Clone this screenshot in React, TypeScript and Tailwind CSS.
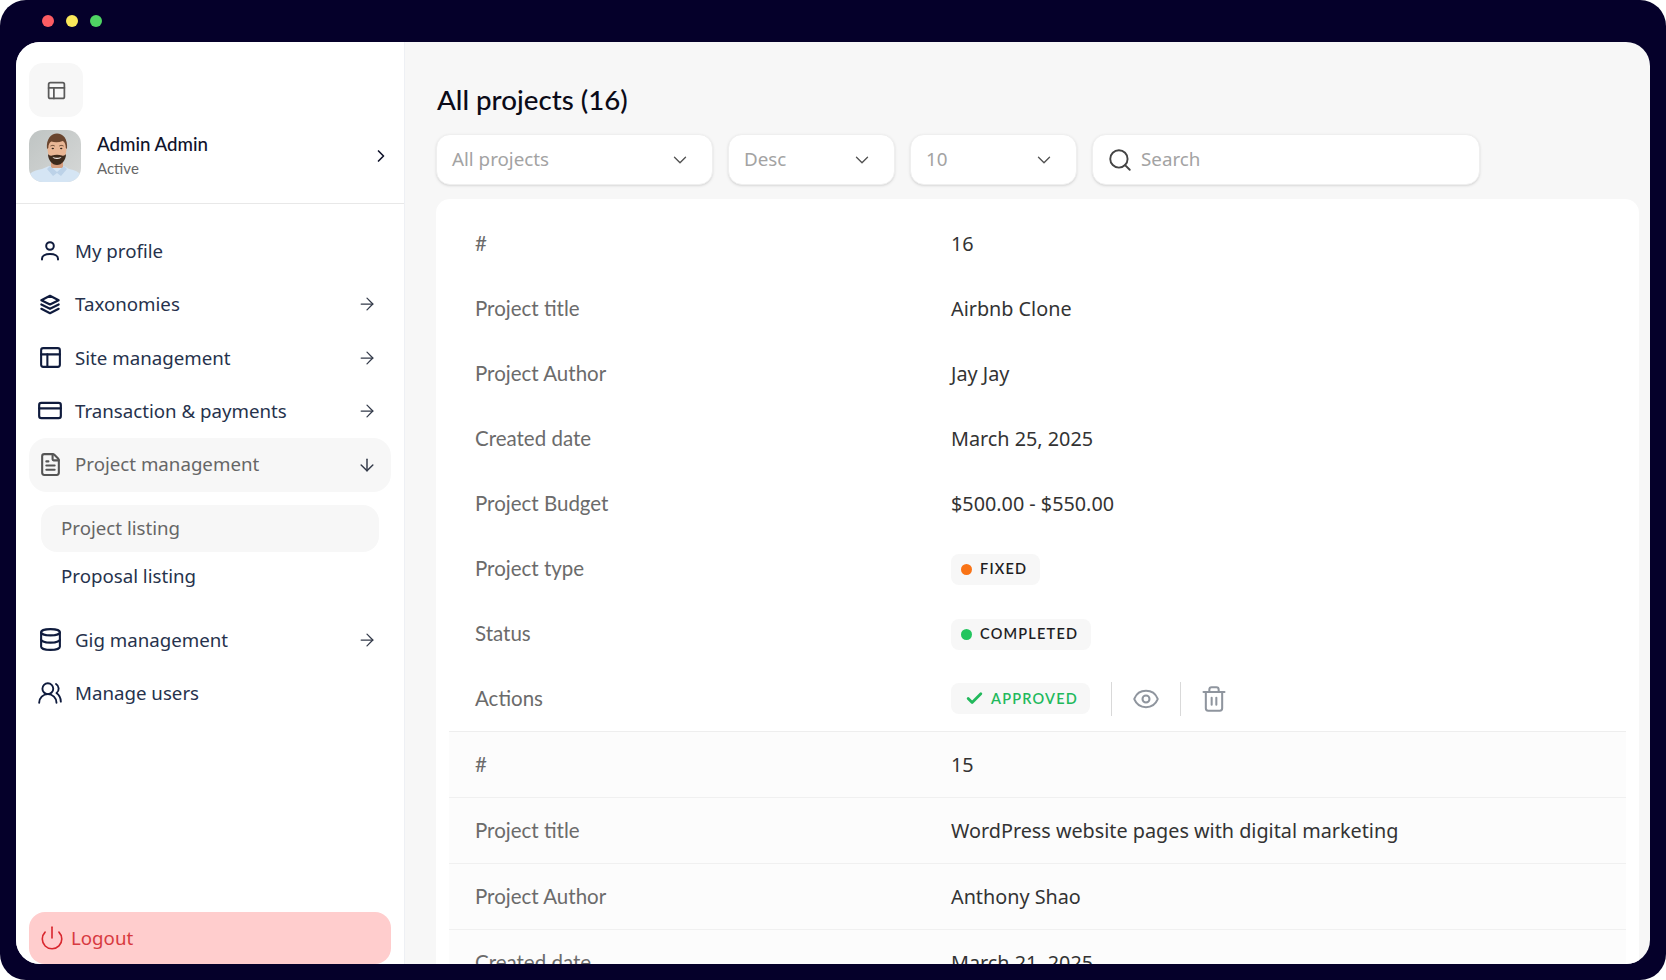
import { ArrowDown, ArrowRight, Check, ChevronDown, ChevronRight, CreditCard, Database, Eye, FileText, PanelsTopLeft, Power, Search, Trash2, UsersRound } from "lucide-react";
import { TbStack2 } from "react-icons/tb";

const firstRecord = [
  { label: "#", value: "16" },
  { label: "Project title", value: "Airbnb Clone" },
  { label: "Project Author", value: "Jay Jay" },
  { label: "Created date", value: "March 25, 2025" },
  { label: "Project Budget", value: "$500.00 - $550.00" },
];

const secondRecord = [
  { label: "#", value: "15" },
  { label: "Project title", value: "WordPress website pages with digital marketing" },
  { label: "Project Author", value: "Anthony Shao" },
  { label: "Created date", value: "March 21, 2025" },
];

const Avatar = () => (
  <svg viewBox="0 0 52 52" className="w-[52px] h-[52px] rounded-[14px] shrink-0">
    <defs>
      <linearGradient id="wall" x1="0" y1="0" x2="1" y2="1">
        <stop offset="0" stopColor="#bfc4c3" />
        <stop offset="1" stopColor="#d6d8d7" />
      </linearGradient>
      <filter id="soft">
        <feGaussianBlur stdDeviation="0.35" />
      </filter>
    </defs>
    <rect width="52" height="52" fill="url(#wall)" />
    <g filter="url(#soft)">
      <path d="M0 52v-7c2-3 7-5 13-6l7-3h15l5 3c6 1 10 3 12 6v7z" fill="#d5e5f4" />
      <rect x="22" y="28" width="12" height="10" fill="#d59d7e" />
      <path d="M21 36l7 6 7-6 3 3-6 7-4-3-4 3-6-7z" fill="#bcd2e8" />
      <ellipse cx="28" cy="19" rx="9.500" ry="13.500" fill="#e9b695" />
      <path d="M18 19c-1-10 4-15.500 10-15.500s11 5 10 15.500l-1.200-1c0-3-1-6-3-7-4 1.500-8 1.500-11.500.5-2 1-3 3.500-3 6.500z" fill="#6a452e" />
      <path d="M19 24c1 1.500 2.500 2 4 1.500 3-1 7-1 10 0 1.500.5 3 0 4-1.500 0 6-4 11-9 11s-9-5-9-11z" fill="#3d2a1f" />
      <path d="M23.500 27c2 1 7 1 9 0-1 2.500-8 2.500-9 0z" fill="#f7f1eb" />
      <ellipse cx="23.800" cy="18.500" rx="1.200" ry=".8" fill="#33251d" />
      <ellipse cx="32.200" cy="18.500" rx="1.200" ry=".8" fill="#33251d" />
      <path d="M21.500 16c1.500-.8 3-.8 4.200 0M30.300 16c1.200-.8 2.700-.8 4.200 0" stroke="#5a3c28" strokeWidth=".9" fill="none" />
    </g>
  </svg>
);

const UserIcon = () => (
  <svg viewBox="0 0 24 24" width="24" height="24" fill="none" stroke="currentColor" strokeWidth="2" strokeLinecap="round">
    <circle cx="12" cy="7" r="3.800" />
    <path d="M4 20.500v-.800c0-2.800 3.200-4.700 8-4.700s8 1.900 8 4.700v.800" />
  </svg>
);

const NavItem = ({ icon, label, arrow = true }: { icon: React.ReactNode; label: string; arrow?: boolean }) => (
  <div className="h-[53.250px] pl-[8px] pr-[14px] flex items-center text-[#26324c]">
    <span className="w-[26px] flex justify-center shrink-0 text-[#0f1b3d]">{icon}</span>
    <span className="ml-[12px] text-[18.700px] flex-1">{label}</span>
    {arrow && <ArrowRight size={20} strokeWidth={1.5} className="text-[#333a49]" />}
  </div>
);

const Sidebar = () => (
  <aside className="w-[389px] shrink-0 bg-white border-r border-[#eef0f4] flex flex-col font-['Noto_Sans',sans-serif]">
    <div className="pt-[21px] px-[13px] h-[162px] border-b border-[#e8e8e8]">
      <button className="w-[54px] h-[54px] rounded-[14px] bg-[#f7f7f7] flex items-center justify-center text-[#5a5a5a]">
        <PanelsTopLeft size={21} strokeWidth={2} />
      </button>
      <div className="mt-[13px] flex items-center">
        <Avatar />
        <div className="ml-[16px] flex-1 mb-[2px]">
          <div className="font-['Lato',sans-serif] text-[18.700px] leading-[24px] font-medium text-[#10132b]">Admin Admin</div>
          <div className="font-['Lato',sans-serif] text-[15px] leading-[20px] mt-[2px] text-[#666]">Active</div>
        </div>
        <ChevronRight size={20} strokeWidth={2} className="text-[#10132b]" />
      </div>
    </div>
    <nav className="pt-[20.500px] px-[13px] flex-1 flex flex-col">
      <NavItem icon={<UserIcon />} label="My profile" arrow={false} />
      <NavItem icon={<TbStack2 size={29} />} label="Taxonomies" />
      <NavItem icon={<PanelsTopLeft size={25} strokeWidth={2} />} label="Site management" />
      <NavItem icon={<CreditCard size={27} strokeWidth={2} />} label="Transaction & payments" />
      <div className="h-[54px] pl-[8px] pr-[14px] flex items-center rounded-[18px] bg-[#f7f7f7] text-[#666]">
        <span className="w-[26px] flex justify-center shrink-0">
          <FileText size={25} strokeWidth={2} className="text-[#555]" />
        </span>
        <span className="ml-[12px] text-[18.700px] flex-1">Project management</span>
        <ArrowDown size={20} strokeWidth={1.75} className="text-[#333a49]" />
      </div>
      <div className="mt-[13px] mx-[12px] h-[47px] pl-[20px] flex items-center rounded-[16px] bg-[#f7f7f7] text-[18.700px] text-[#666]">Project listing</div>
      <div className="mx-[12px] h-[49px] pl-[20px] flex items-center text-[18.700px] text-[#26324c]">Proposal listing</div>
      <div className="mt-[12.500px]">
        <NavItem icon={<Database size={25} strokeWidth={2} />} label="Gig management" />
        <NavItem icon={<UsersRound size={26} strokeWidth={1.75} />} label="Manage users" arrow={false} />
      </div>
      <button className="mt-auto h-[52px] pl-[10px] flex items-center rounded-[16px] bg-[#ffcdcd] text-[18.700px] text-[#d83a40]">
        <Power size={26} strokeWidth={1.5} className="text-[#d9272e]" />
        <span className="ml-[6px]">Logout</span>
      </button>
    </nav>
  </aside>
);

const Select = ({ value, width }: { value: string; width: string }) => (
  <div className={`${width} h-[51px] pl-[15px] pr-[21px] flex items-center justify-between bg-white rounded-[14px] border border-[#efefef] shadow-sm text-[18.800px] text-[#a3a3a3]`}>
    <span>{value}</span>
    <ChevronDown size={22} strokeWidth={1.5} className="text-[#555]" />
  </div>
);

const Row = ({ label, children, lined }: { label: string; children: React.ReactNode; lined?: boolean }) => (
  <div className={`flex items-center pl-[26px] ${lined ? "h-[66px] pt-[1px] border-b border-[#f0f0f0]" : "h-[65px]"}`}>
    <div className="w-[476px] pb-[1px] font-['Lato',sans-serif] text-[20.500px] text-[#6b6b6b]">{label}</div>
    <div className="text-[19.800px] text-[#333] flex items-center">{children}</div>
  </div>
);

const Badge = ({ dot, text }: { dot: string; text: string }) => (
  <span className="h-[31px] pl-[10px] pr-[13px] inline-flex items-center rounded-[8px] bg-[#f7f7f7] font-['Lato',sans-serif] text-[14.500px] font-semibold tracking-[1.200px] text-[#1e1e24]">
    <span className={`w-[11px] h-[11px] rounded-full ${dot}`} />
    <span className="ml-[8px]">{text}</span>
  </span>
);

export default function App() {
  return (
    <div className="w-full h-[980px] bg-white font-['Noto_Sans',sans-serif] overflow-hidden">
      <div className="h-full bg-[#05002a] rounded-[26px] flex flex-col pb-[16px] px-[16px]">
        <div className="h-[42px] shrink-0 pl-[26px] flex items-center gap-[12px]">
          <span className="w-[12px] h-[12px] rounded-full bg-[#fd5c63]" />
          <span className="w-[12px] h-[12px] rounded-full bg-[#fbe85a]" />
          <span className="w-[12px] h-[12px] rounded-full bg-[#4fd463]" />
        </div>
        <div className="flex-1 min-h-0 flex rounded-[24px] overflow-hidden bg-[#f7f7f7]">
          <Sidebar />
          <main className="flex-1 min-w-0 pl-[31px] pr-[11px] overflow-hidden">
            <h1 className="mt-[38px] pl-[1px] h-[40px] leading-[40px] font-['Lato',sans-serif] text-[27.700px] font-medium text-[#0b0b18]">All projects (16)</h1>
            <div className="mt-[14px] flex gap-[15px]">
              <Select value="All projects" width="w-[277px]" />
              <Select value="Desc" width="w-[167px]" />
              <Select value="10" width="w-[167px]" />
              <div className="w-[388px] h-[51px] pl-[14px] flex items-center bg-white rounded-[14px] border border-[#efefef] shadow-sm text-[18.800px] text-[#a3a3a3]">
                <Search size={26} strokeWidth={1.75} className="text-[#444]" />
                <span className="ml-[8px]">Search</span>
              </div>
            </div>
            <div className="mt-[14px] bg-white rounded-t-[14px] px-[13px] pt-[12.500px]">
              {firstRecord.map((r) => (
                <Row key={r.label} label={r.label}>{r.value}</Row>
              ))}
              <Row label="Project type"><Badge dot="bg-[#f97316]" text="FIXED" /></Row>
              <Row label="Status"><Badge dot="bg-[#22c55e]" text="COMPLETED" /></Row>
              <div className="h-[65.500px] flex items-center pl-[26px] border-b border-[#eeeeee]">
                <div className="w-[476px] pb-[1px] font-['Lato',sans-serif] text-[20.500px] text-[#6b6b6b]">Actions</div>
                <span className="w-[139px] h-[31px] pl-[14px] inline-flex items-center rounded-[8px] bg-[#f7f7f7] font-['Lato',sans-serif] text-[14.500px] font-semibold tracking-[1.200px] text-[#22b95c]">
                  <Check size={19} strokeWidth={3.500} />
                  <span className="ml-[7px]">APPROVED</span>
                </span>
                <span className="ml-[21px] w-px h-[34px] bg-[#d9d9d9]" />
                <Eye size={28} strokeWidth={1.75} className="ml-[20px] text-[#8f959e]" />
                <span className="ml-[20px] w-px h-[34px] bg-[#d9d9d9]" />
                <Trash2 size={28} strokeWidth={1.75} className="ml-[19px] text-[#8f959e]" />
              </div>
              <div className="bg-[#fcfcfc]">
                {secondRecord.map((r) => (
                  <Row key={r.label} label={r.label} lined>{r.value}</Row>
                ))}
              </div>
            </div>
          </main>
        </div>
      </div>
    </div>
  );
}
